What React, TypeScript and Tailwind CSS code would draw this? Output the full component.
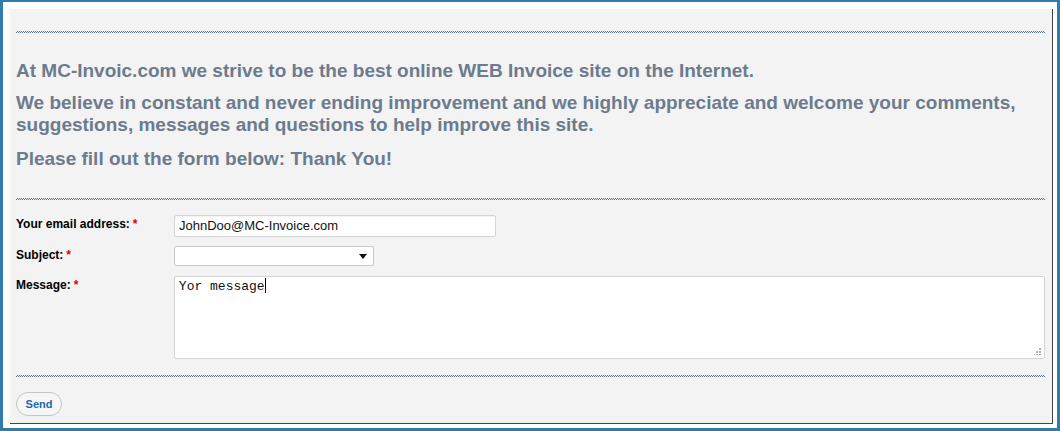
export default function App() {
  return (
    <div className="w-[1060px] h-[431px] bg-white border-[#2f7cad] border-l-[3px] border-t-2 border-r-[3px] border-b-[3px] pl-[7px] pt-[7px] pr-[4px] pb-[4px] font-['Liberation_Sans',Arial,sans-serif]">
      <div className="h-[415px] bg-[#f3f3f3] border-r border-b border-[#444] pl-[6px] pr-[7px] pt-[22px]">
        <Dots />

        {/* Intro */}
        <div className="text-[19px] leading-[22px] font-bold text-[#6c7b8d]">
          <p className="mt-[27px]">
            At MC-Invoic.com we strive to be the best online WEB Invoice site on the Internet.
          </p>
          <p className="mt-[10px]">
            We believe in constant and never ending improvement and we highly appreciate and welcome your comments,
            suggestions, messages and questions to help improve this site.
          </p>
          <p className="mt-[12px]">Please fill out the form below: Thank You!</p>
        </div>

        <div className="mt-[28px]">
          <Dots />
        </div>

        {/* Form */}
        <div className="mt-[15px] flex flex-col gap-[9px] text-[12px] font-bold text-black">
          <div className="flex items-start">
            <label className="w-[158px]">
              Your email address:<span className="ml-[3px] text-[#e00000]">*</span>
            </label>
            <div className="w-[322px] h-[22px] bg-white border border-[#d4d4d4] rounded-[2px] shadow-[inset_0_1px_1px_rgba(0,0,0,0.05)] pl-[4px] text-[13px] font-normal leading-[20px] text-[#111]">
              JohnDoo@MC-Invoice.com
            </div>
          </div>
          <div className="flex items-start">
            <label className="w-[158px]">
              Subject:<span className="ml-[3px] text-[#e00000]">*</span>
            </label>
            <div className="w-[200px] h-[20px] bg-white border border-[#c8c8c8] rounded-[2px] flex items-center justify-end pr-[6px]">
              <svg width="8" height="5" viewBox="0 0 8 5">
                <path d="M0 0h8L4 5z" fill="#111" />
              </svg>
            </div>
          </div>
          <div className="flex items-start mt-[1px]">
            <label className="w-[158px]">
              Message:<span className="ml-[3px] text-[#e00000]">*</span>
            </label>
            <div className="relative w-[872px] h-[83px] bg-white border border-[#d4d4d4] rounded-[2px] pl-[4px] pt-[1px] font-['Liberation_Mono','Courier_New',monospace] text-[13px] font-normal leading-[16px] text-[#111]">
              Yor message
              <span className="inline-block w-px h-[15px] bg-black align-[-3px]" />
              <svg className="absolute right-[3px] bottom-[3px]" width="7" height="7" viewBox="0 0 7 7">
                <rect x="5" y="0" width="2" height="2" fill="#b0b0b0" />
                <rect x="2" y="3" width="2" height="2" fill="#b0b0b0" />
                <rect x="5" y="3" width="2" height="2" fill="#b0b0b0" />
                <rect x="-1" y="6" width="2" height="2" fill="#b0b0b0" />
                <rect x="2" y="6" width="2" height="2" fill="#b0b0b0" />
                <rect x="5" y="6" width="2" height="2" fill="#b0b0b0" />
              </svg>
            </div>
          </div>
        </div>

        <div className="mt-[16px]">
          <Dots />
        </div>

        <button className="mt-[15px] w-[46px] h-[24px] rounded-full border border-[#c4c4c4] bg-[#f4f6f8] text-[11px] font-bold text-[#1d6aa3]">
          Send
        </button>
      </div>
    </div>
  );
}

function Dots() {
  return (
    <div className="h-[2px] w-full bg-[conic-gradient(#5b6f86_25%,transparent_0_50%,#5b6f86_0_75%,transparent_0)] bg-[length:2px_2px]" />
  );
}
